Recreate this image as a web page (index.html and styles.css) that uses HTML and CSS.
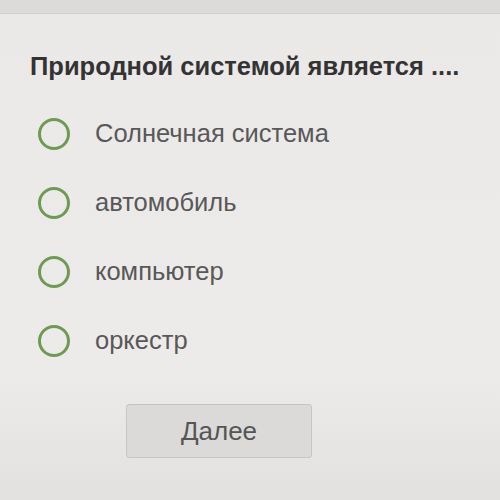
FILE: index.html
```html
<!DOCTYPE html>
<html>
<head>
<meta charset="utf-8">
<link rel="stylesheet" href="styles.css">
</head>
<body>
<div class="topbar"></div>
<main class="quiz">
  <h1 class="question">Природной системой является ....</h1>
  <ul class="options">
    <li class="option"><span class="radio"></span><span class="label">Солнечная система</span></li>
    <li class="option"><span class="radio"></span><span class="label">автомобиль</span></li>
    <li class="option"><span class="radio"></span><span class="label">компьютер</span></li>
    <li class="option"><span class="radio"></span><span class="label">оркестр</span></li>
  </ul>
  <div class="actions"><button class="next">Далее</button></div>
</main>
</body>
</html>
```
FILE: styles.css
```css
html, body {
  margin: 0;
  padding: 0;
  width: 500px;
  height: 500px;
  overflow: hidden;
}
body {
  background: linear-gradient(#eae9e7 0%, #ecebe9 75%, #e2e1df 100%);
  font-family: "Liberation Sans", Arial, sans-serif;
}
.topbar {
  height: 13px;
  background: #dcdbd9;
  border-bottom: 1px solid #cfcecc;
}
.quiz {
  padding: 0 0 0 30px;
}
.question {
  margin: 37px 0 0 0;
  font-size: 25.5px;
  font-weight: bold;
  color: #333;
  line-height: 30px;
}
.options {
  list-style: none;
  margin: 18px 0 0 0;
  padding: 0 0 0 8px;
}
.option {
  display: flex;
  align-items: center;
  height: 69px;
}
.radio {
  width: 26px;
  height: 26px;
  border: 3px solid #6f9a52;
  border-radius: 50%;
  box-sizing: content-box;
}
.label {
  margin-left: 25px;
  font-size: 25.5px;
  color: #585858;
}
.actions {
  margin-top: 29px;
  padding-left: 96px;
}
.next {
  width: 186px;
  height: 54px;
  background: #dbdad8;
  border: 1px solid #c6c5c3;
  border-radius: 3px;
  font-family: "Liberation Sans", Arial, sans-serif;
  font-size: 26px;
  color: #555;
}
```
